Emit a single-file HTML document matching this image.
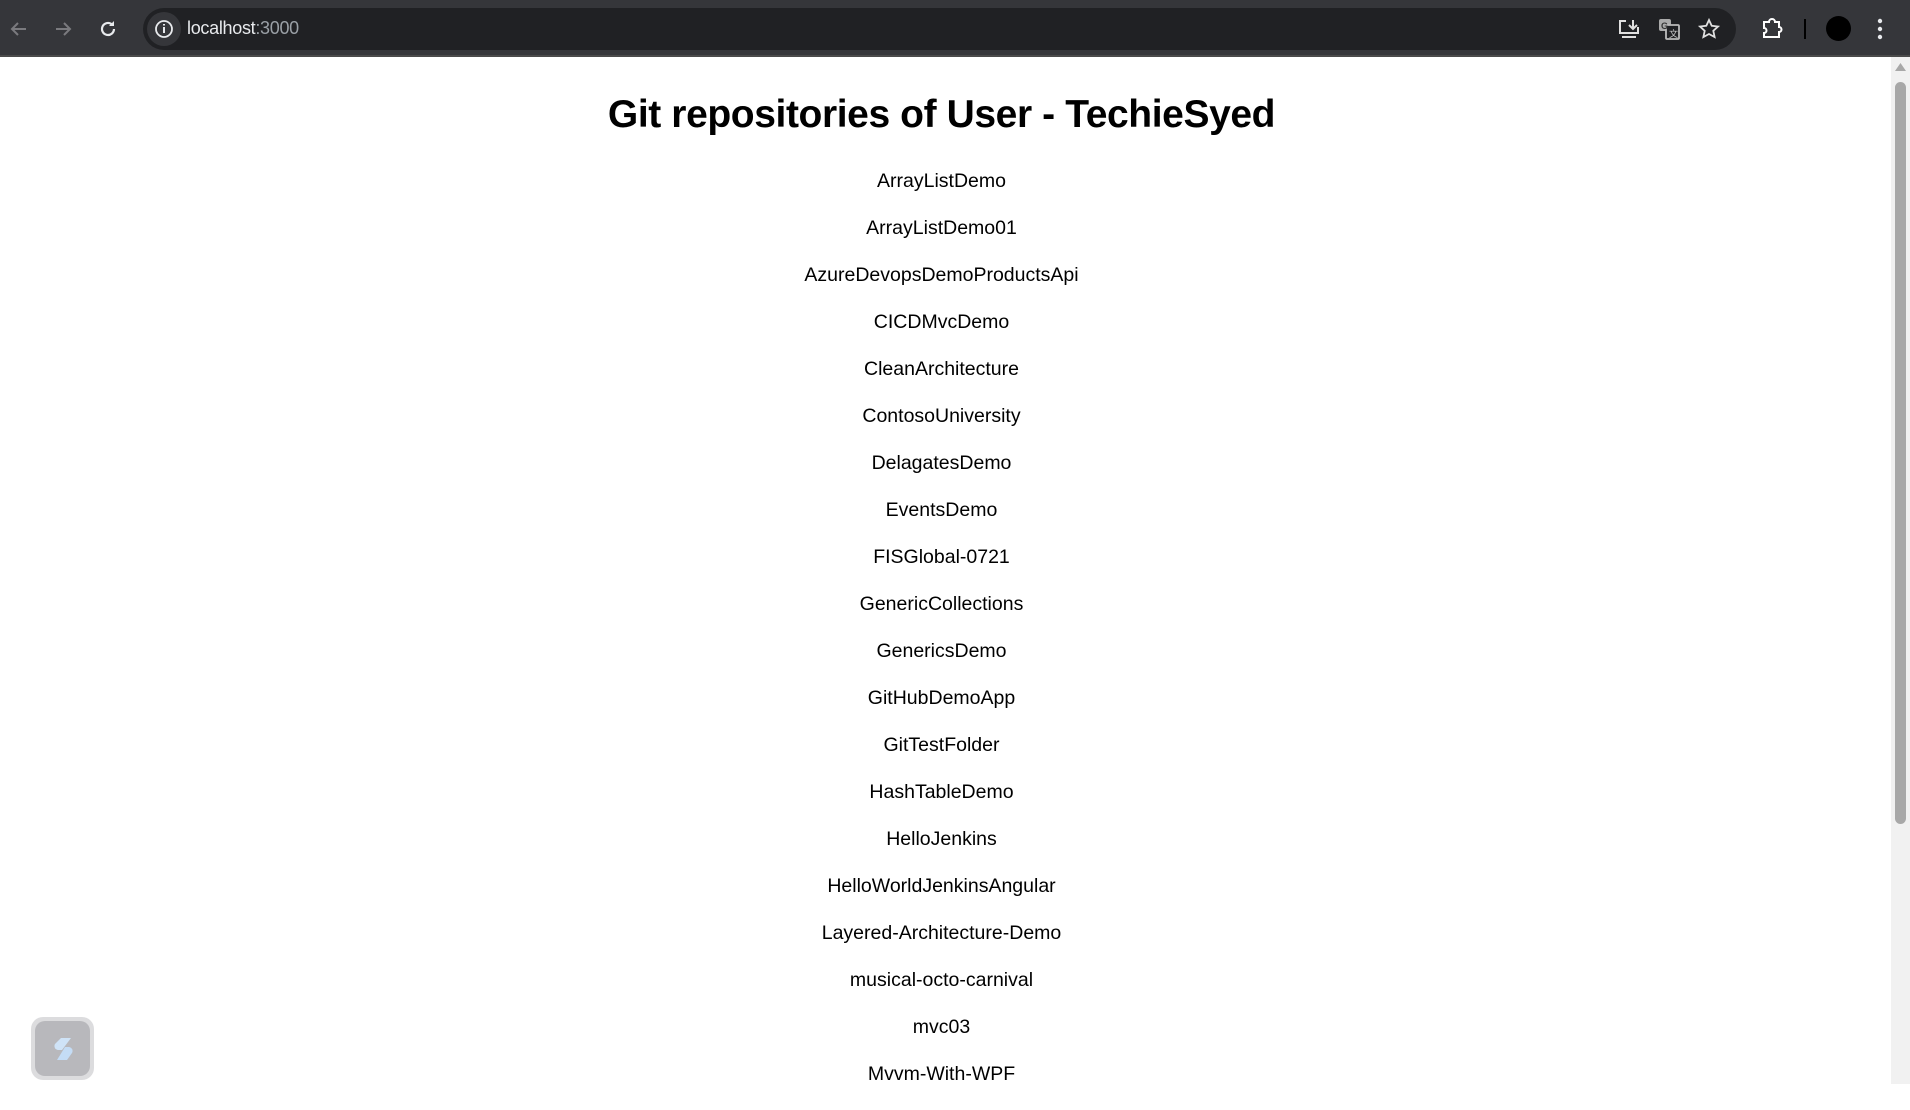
<!DOCTYPE html>
<html><head><meta charset="utf-8"><style>
*{margin:0;padding:0;box-sizing:border-box}
body{width:1910px;height:1084px;overflow:hidden;background:#fff;font-family:"Liberation Sans",sans-serif;position:relative}
.top{position:absolute;left:0;top:0;width:1910px;height:57px;background:#35363a;border-bottom:2px solid #4a4a4a}
.addr{position:absolute;left:143px;top:8px;width:1593px;height:42px;border-radius:21px;background:#202124}
.addr .info{position:absolute;left:4px;top:4px;width:34px;height:34px;border-radius:17px;background:#35363a}
.addr .url{position:absolute;left:44px;top:10px;font-size:18px;color:#e8eaed;letter-spacing:-0.3px}
.addr .url span{color:#9aa0a6}
.ic{position:absolute}
h1{position:absolute;left:0;width:1883px;top:93px;text-align:center;font-size:39px;font-weight:bold;color:#000;letter-spacing:-0.4px}
.list{position:absolute;left:0;width:1883px;top:170px}
.list p{height:47px;text-align:center;font-size:19.5px;color:#000;line-height:22px}
.sb{position:absolute;left:1891px;top:57px;width:19px;height:1027px;background:#f1f1f1}
.thumb{position:absolute;left:4px;top:25px;width:11px;height:742px;border-radius:6px;background:#a8a8a8}
.fab{position:absolute;left:31px;top:1017px;width:63px;height:63px;border-radius:12px;background:#dcdcde;padding:4px}
.fab div{width:55px;height:55px;border-radius:10px;background:#b8b8bc}
</style></head><body>
<div class="top">
<svg class="ic" style="left:8px;top:18px" width="22" height="22" viewBox="0 0 22 22"><path d="M18 11H4M10 5l-6 6 6 6" stroke="#7a7a7e" stroke-width="2" fill="none"/></svg>
<svg class="ic" style="left:52px;top:18px" width="22" height="22" viewBox="0 0 22 22"><path d="M4 11h14M12 5l6 6-6 6" stroke="#7a7a7e" stroke-width="2" fill="none"/></svg>
<svg class="ic" style="left:97px;top:18px" width="22" height="22" viewBox="0 0 22 22"><path d="M17 11a6 6 0 1 1-2-4.5" stroke="#e8eaed" stroke-width="2.2" fill="none"/><path d="M17 3v5h-5z" fill="#e8eaed"/></svg>
<div class="addr"><div class="info"><svg width="34" height="34" viewBox="0 0 34 34"><circle cx="17" cy="17" r="8" stroke="#e8eaed" stroke-width="1.8" fill="none"/><path d="M17 15v6M17 12v1.5" stroke="#e8eaed" stroke-width="2"/></svg></div><div class="url">localhost<span>:3000</span></div></div>
<svg class="ic" style="left:1617px;top:18px" width="24" height="22" viewBox="0 0 24 22"><path d="M9 3H3v12h18V9M5 19h14" stroke="#e0e0e0" stroke-width="2" fill="none"/><path d="M16 2v8M12 7l4 4 4-4" stroke="#e0e0e0" stroke-width="2" fill="none"/></svg>
<svg class="ic" style="left:1657px;top:17px" width="24" height="24" viewBox="0 0 24 24"><rect x="2" y="2" width="12" height="12" rx="2" fill="#aaa"/><rect x="9" y="8" width="13" height="14" rx="1" stroke="#bbb" stroke-width="1.8" fill="#202124"/><text x="4" y="12" font-size="9" fill="#333" font-weight="bold">G</text><text x="12" y="20" font-size="9" fill="#ccc">文</text></svg>
<svg class="ic" style="left:1697px;top:17px" width="24" height="24" viewBox="0 0 24 24"><path d="M12 3l2.7 5.8 6.3.7-4.7 4.3 1.3 6.2L12 17l-5.6 3 1.3-6.2L3 9.5l6.3-.7z" stroke="#e0e0e0" stroke-width="1.8" fill="none"/></svg>
<svg class="ic" style="left:1760px;top:17px" width="24" height="24" viewBox="0 0 24 24"><path d="M4 5h5a3 3 0 0 1 6 0h4v5a2.5 2.5 0 0 1 0 5v5H4v-4a2.5 2.5 0 0 0 0-5z" stroke="#fff" stroke-width="2" fill="none"/></svg>
<div class="ic" style="left:1804px;top:19px;width:2px;height:20px;background:#000"></div>
<div class="ic" style="left:1826px;top:16px;width:25px;height:25px;border-radius:50%;background:#000"></div>
<svg class="ic" style="left:1876px;top:17px" width="8" height="24" viewBox="0 0 8 24"><circle cx="4" cy="4" r="2.2" fill="#e8eaed"/><circle cx="4" cy="12" r="2.2" fill="#e8eaed"/><circle cx="4" cy="20" r="2.2" fill="#e8eaed"/></svg>
</div>
<h1>Git repositories of User - TechieSyed</h1>
<div class="list">
<p>ArrayListDemo</p><p>ArrayListDemo01</p><p>AzureDevopsDemoProductsApi</p><p>CICDMvcDemo</p><p>CleanArchitecture</p><p>ContosoUniversity</p><p>DelagatesDemo</p><p>EventsDemo</p><p>FISGlobal-0721</p><p>GenericCollections</p><p>GenericsDemo</p><p>GitHubDemoApp</p><p>GitTestFolder</p><p>HashTableDemo</p><p>HelloJenkins</p><p>HelloWorldJenkinsAngular</p><p>Layered-Architecture-Demo</p><p>musical-octo-carnival</p><p>mvc03</p><p>Mvvm-With-WPF</p>
</div>
<div class="sb"><svg style="position:absolute;left:4px;top:6px" width="11" height="8"><path d="M0 8L5.5 0 11 8z" fill="#a8a8a8"/></svg><div class="thumb"></div></div>
<div class="fab"><div><svg width="55" height="55" viewBox="0 0 55 55"><path d="M26 17h10l-9 12h-4a4 4 0 0 1-3-6z" fill="#cfe3f7"/><path d="M30 26h4a4 4 0 0 1 3 6l-5 7H22z" fill="#c4dcf5"/></svg></div></div>
</body></html>
